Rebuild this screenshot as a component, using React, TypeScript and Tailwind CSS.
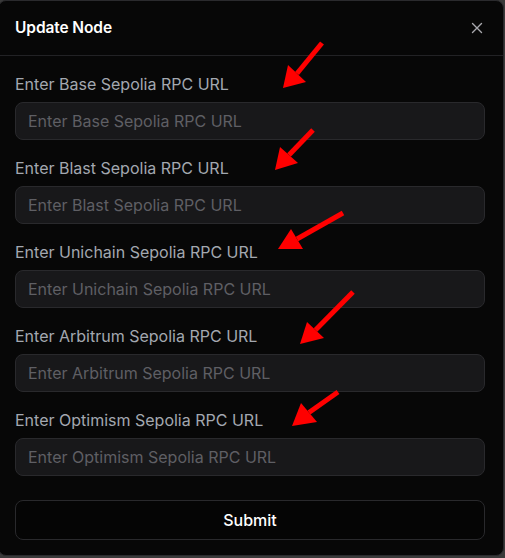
import React from "react";

const chains = ["Base", "Blast", "Unichain", "Arbitrum", "Optimism"];

type Arrow = { tail: [number, number]; tip: [number, number]; w1: [number, number]; w2: [number, number] };

const arrows: Arrow[] = [
  { tail: [322, 43], tip: [283, 88], w1: [288, 65], w2: [306, 82] },
  { tail: [313, 130], tip: [275, 170], w1: [280, 147], w2: [298, 163] },
  { tail: [343, 213], tip: [278, 249], w1: [291, 229], w2: [303, 249] },
  { tail: [353, 292], tip: [300, 344], w1: [307, 322], w2: [324, 338] },
  { tail: [338, 392], tip: [292, 426], w1: [301, 403], w2: [317, 422] },
];

export default function App() {
  return (
    <div className="w-[505px] h-[558px] bg-[#3a3a3a] overflow-hidden" style={{ fontFamily: "Inter, 'Liberation Sans', sans-serif" }}>
      <div className="relative -ml-[2px] w-[506px] h-[556px] rounded-lg border border-[#2a2a2d] bg-[#070707] flex flex-col">
        <div className="flex items-center justify-between h-[55px] pl-4 pr-[20px] border-b border-[#222225]">
          <h2 className="text-white text-[15.5px] font-semibold tracking-[-0.1px]">Update Node</h2>
          <svg width="12" height="12" viewBox="0 0 12 12" className="text-[#a8a8ad]">
            <path d="M1.5 1.5 L10.5 10.5 M10.5 1.5 L1.5 10.5" stroke="currentColor" strokeWidth="1.4" strokeLinecap="round" />
          </svg>
        </div>
        <div className="flex flex-col pl-4 pr-[18px] pt-4 gap-4">
          {chains.map((c) => (
            <div key={c} className="flex flex-col gap-[6px]">
              <label className="text-[16px] leading-6 text-[#a3a8b0]">Enter {c} Sepolia RPC URL</label>
              <input
                placeholder={`Enter ${c} Sepolia RPC URL`}
                className="h-[38px] w-full rounded-lg border border-[#29292c] bg-[#18181a] px-3 text-[16px] text-white placeholder:text-[#5f5f64] outline-none"
              />
            </div>
          ))}
          <button className="mt-2 h-[40px] w-full rounded-lg border border-[#29292c] bg-[#050505] text-white text-[16px] font-medium">
            Submit
          </button>
        </div>
        <svg className="absolute left-0 top-0 pointer-events-none" width="505" height="558" viewBox="-1 1 505 558">
          {arrows.map((a, i) => {
            const mx = (a.w1[0] + a.w2[0]) / 2;
            const my = (a.w1[1] + a.w2[1]) / 2;
            return (
              <g key={i} fill="#ff0000" stroke="#ff0000">
                <line x1={a.tail[0]} y1={a.tail[1]} x2={mx} y2={my} strokeWidth="5" />
                <polygon points={`${a.tip[0]},${a.tip[1]} ${a.w1[0]},${a.w1[1]} ${a.w2[0]},${a.w2[1]}`} strokeWidth="0" />
              </g>
            );
          })}
        </svg>
      </div>
    </div>
  );
}
